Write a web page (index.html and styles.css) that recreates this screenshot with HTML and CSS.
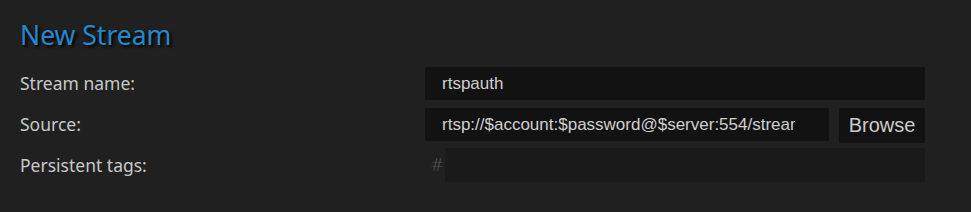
FILE: index.html
```html
<!DOCTYPE html>
<html>
<head>
<meta charset="utf-8">
<link rel="stylesheet" href="styles.css">
</head>
<body>
<div class="page">
  <h1 class="title">New Stream</h1>
  <div class="form">
    <div class="form-row first">
      <label class="label">Stream name:</label>
      <input class="input" type="text" value="rtspauth">
    </div>
    <div class="form-row second">
      <label class="label">Source:</label>
      <div class="source-group">
        <input class="input source" type="text" value="rtsp://$account:$password@$server:554/stream">
        <button class="browse">Browse</button>
      </div>
    </div>
    <div class="form-row">
      <label class="label">Persistent tags:</label>
      <div class="tags">
        <span class="hash">#</span>
        <input class="input tag-input" type="text" value="">
      </div>
    </div>
  </div>
</div>
</body>
</html>
```
FILE: styles.css
```css
html, body {
  margin: 0;
  padding: 0;
  background: #202020;
  width: 971px;
  height: 212px;
  overflow: hidden;
}
.page {
  padding: 16px 20px 0 20px;
  font-family: "Noto Sans", "DejaVu Sans", sans-serif;
}
.title {
  margin: 0 0 13px 0;
  font-weight: normal;
  font-size: 26.5px;
  line-height: 38px;
  color: #2588cc;
  text-shadow: 2px 2px 3px #000;
}
.form {
  display: flex;
  flex-direction: column;
}
.form-row {
  display: flex;
  align-items: flex-start;
}
.form-row.first {
  margin-bottom: 8px;
}
.form-row.second {
  margin-bottom: 5px;
}
.label {
  width: 405px;
  flex: none;
  color: #c8c8c8;
  font-size: 17.5px;
  line-height: 33px;
}
.input {
  box-sizing: border-box;
  width: 500px;
  height: 33px;
  border: none;
  outline: none;
  background: #121212;
  color: #cfcfcf;
  font-family: "Liberation Sans", Arial, sans-serif;
  font-size: 17px;
  padding: 0 17px;
  margin: 0;
}
.source-group {
  display: flex;
  gap: 10px;
  align-items: flex-start;
}
.source {
  width: 404px;
  padding-right: 34px;
}
.browse {
  box-sizing: border-box;
  width: 86px;
  height: 35px;
  border: none;
  background: #121212;
  color: #cccccc;
  font-family: "Liberation Sans", Arial, sans-serif;
  font-size: 20px;
  padding: 0;
  margin: 0;
}
.tags {
  display: flex;
  align-items: center;
}
.hash {
  width: 20px;
  box-sizing: border-box;
  padding-left: 5px;
  color: #555;
  font-family: "DejaVu Sans", sans-serif;
  font-size: 17px;
  font-weight: 300;
}
.tag-input {
  width: 480px;
  height: 34px;
  background: #1a1a1a;
}
.form-row:last-child .label {
  line-height: 34px;
}
```
